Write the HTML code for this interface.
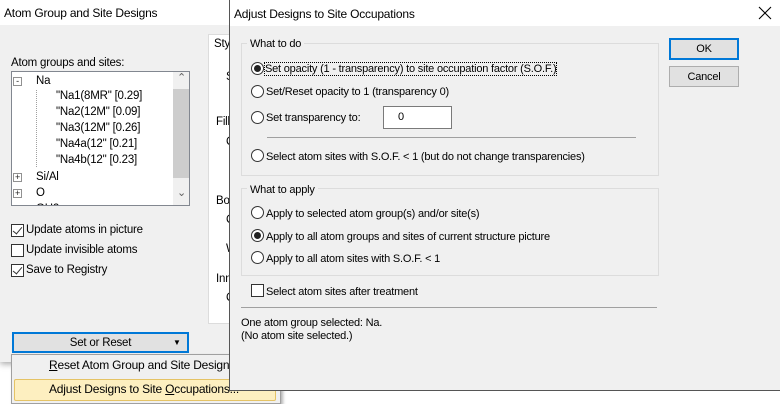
<!DOCTYPE html>
<html><head><style>
*{margin:0;padding:0;box-sizing:border-box}
body{width:780px;height:404px;overflow:hidden;background:#fff;font-family:"Liberation Sans",sans-serif;font-size:11.5px;letter-spacing:-0.2px;color:#000;position:relative}
.a{position:absolute;white-space:nowrap}
.t{margin-top:2px}
.rad{position:absolute;width:13px;height:13px;border:1px solid #333;border-radius:50%;background:#fff}
.rad.on::after{content:"";position:absolute;left:2px;top:2px;width:7px;height:7px;border-radius:50%;background:#222}
.chk{position:absolute;width:13px;height:13px;border:1px solid #333;background:#fff}
.chk.on::after{content:"";position:absolute;left:3px;top:0px;width:4px;height:8px;border:solid #333;border-width:0 1.5px 1.5px 0;transform:rotate(40deg)}
.grp{position:absolute;border:1px solid #dcdcdc}
.btn{position:absolute;background:#e1e1e1;border:1px solid #adadad;text-align:center}
.d{font-size:11px}
</style></head><body>
<!-- left window -->
<div class="a" style="left:0;top:0;width:282px;height:362px;background:#f0f0f0;box-shadow:0 2px 6px rgba(0,0,0,.35)"></div>
<div class="a" style="left:0;top:0;width:282px;height:25px;background:#fff"></div>
<div class="a" style="left:4px;top:6px;font-size:12px">Atom Group and Site Designs</div>
<div class="a" style="left:11px;top:57px">Atom groups and sites:</div>
<div class="a" style="left:11px;top:71px;width:179px;height:135px;background:#fff;border:1px solid #828790;overflow:hidden">
 <div class="a" style="left:161px;top:0;width:17px;height:133px;background:#f0f0f0"></div>
 <div class="a" style="left:161px;top:17px;width:17px;height:89px;background:#cdcdcd"></div>
 <div class="a" style="left:165px;top:-1px;color:#606060;font-size:11px">&#8963;</div>
 <div class="a" style="left:165px;top:114px;color:#606060;font-size:11px">&#8964;</div>
 <div class="a" style="left:1px;top:5px;width:9px;height:9px;border:1px solid #919191;font-size:9px;line-height:7px;text-align:center;color:#222">-</div>
 <div class="a" style="left:24px;top:3px">Na</div>
 <div class="a" style="left:24px;top:18px;width:1px;height:77px;border-left:1px dotted #a0a0a0"></div>
 <div class="a" style="left:44px;top:18px">"Na1(8MR" [0.29]</div>
 <div class="a" style="left:44px;top:34px">"Na2(12M" [0.09]</div>
 <div class="a" style="left:44px;top:50px">"Na3(12M" [0.26]</div>
 <div class="a" style="left:44px;top:66px">"Na4a(12" [0.21]</div>
 <div class="a" style="left:44px;top:82px">"Na4b(12" [0.23]</div>
 <div class="a" style="left:1px;top:101px;width:9px;height:9px;border:1px solid #919191;font-size:9px;line-height:7px;text-align:center;color:#222">+</div>
 <div class="a" style="left:24px;top:99px">Si/Al</div>
 <div class="a" style="left:1px;top:117px;width:9px;height:9px;border:1px solid #919191;font-size:9px;line-height:7px;text-align:center;color:#222">+</div>
 <div class="a" style="left:24px;top:115px">O</div>
 <div class="a" style="left:24px;top:131px">OH2</div>
</div>
<div class="chk on" style="left:11px;top:224px"></div><div class="a" style="left:26px;top:224px">Update atoms in picture</div>
<div class="chk" style="left:11px;top:244px"></div><div class="a" style="left:26px;top:244px">Update invisible atoms</div>
<div class="chk on" style="left:11px;top:264px"></div><div class="a" style="left:26px;top:264px">Save to Registry</div>
<div class="a" style="left:208px;top:34px;width:30px;height:290px;background:#fff;border:1px solid #dcdcdc"></div>
<div class="a" style="left:214px;top:38px">Sty</div>
<div class="a" style="left:226px;top:71px">S</div>
<div class="a" style="left:216px;top:116px">Fill</div>
<div class="a" style="left:226px;top:136px">C</div>
<div class="a" style="left:216px;top:195px">Bor</div>
<div class="a" style="left:226px;top:214px">C</div>
<div class="a" style="left:226px;top:243px">W</div>
<div class="a" style="left:216px;top:273px">Inn</div>
<div class="a" style="left:226px;top:292px">C</div>
<div class="a" style="left:12px;top:332px;width:177px;height:21px;background:#e1e1e1;border:2px solid #0078d7;text-align:center;line-height:18px">Set or Reset</div>
<div class="a" style="left:173px;top:338px;font-size:8px">&#9660;</div>
<!-- menu -->
<div class="a" style="left:11px;top:354px;width:270px;height:50px;background:#f0f0f0;border:1px solid #a0a0a0;box-shadow:2px 2px 3px rgba(0,0,0,.3)"></div>
<div class="a" style="left:14px;top:379px;width:262px;height:22px;background:#fdefc0;border:1px solid #e5c365;border-radius:2px"></div>
<div class="a" style="left:49px;top:358px;font-size:12px"><u>R</u>eset Atom Group and Site Designs</div>
<div class="a" style="left:49px;top:382px;font-size:12px">Adjust Designs to Site <u>O</u>ccupations...</div>
<!-- dialog -->
<div class="a" style="left:229px;top:0;width:551px;height:391px;background:#f0f0f0;border:1px solid #555;border-top:none;border-right:none"></div>
<div class="a" style="left:230px;top:0;width:550px;height:26px;background:#fff"></div>
<div class="a" style="left:234px;top:7px;font-size:12px">Adjust Designs to Site Occupations</div>
<svg class="a" style="left:758px;top:6px" width="14" height="14"><path d="M1 1L13 13M13 1L1 13" stroke="#000" stroke-width="1.1"/></svg>
<div class="d">
<div class="grp" style="left:241px;top:43px;width:418px;height:133px"></div>
<div class="a t" style="left:247px;top:36px;background:#f0f0f0;padding:0 3px">What to do</div>
<div class="rad on" style="left:251px;top:62px"></div>
<div class="a t" style="left:265px;top:61px;outline:1px dotted #000">Set opacity (1 - transparency) to site occupation factor (S.O.F.)</div>
<div class="rad" style="left:251px;top:85px"></div><div class="a t" style="left:266px;top:84px">Set/Reset opacity to 1 (transparency 0)</div>
<div class="rad" style="left:251px;top:111px"></div><div class="a t" style="left:266px;top:110px">Set transparency to:</div>
<div class="a" style="left:383px;top:106px;width:69px;height:23px;background:#fff;border:1px solid #7a7a7a;padding:4px 0 0 14px">0</div>
<div class="a" style="left:267px;top:137px;width:369px;height:1px;background:#a0a0a0"></div>
<div class="rad" style="left:251px;top:149px"></div><div class="a t" style="left:266px;top:149px">Select atom sites with S.O.F. &lt; 1 (but do not change transparencies)</div>
<div class="grp" style="left:241px;top:188px;width:418px;height:88px"></div>
<div class="a t" style="left:247px;top:182px;background:#f0f0f0;padding:0 3px">What to apply</div>
<div class="rad" style="left:251px;top:206px"></div><div class="a t" style="left:266px;top:206px">Apply to selected atom group(s) and/or site(s)</div>
<div class="rad on" style="left:251px;top:229px"></div><div class="a t" style="left:266px;top:229px">Apply to all atom groups and sites of current structure picture</div>
<div class="rad" style="left:251px;top:251px"></div><div class="a t" style="left:266px;top:251px">Apply to all atom sites with S.O.F. &lt; 1</div>
<div class="chk" style="left:251px;top:284px"></div><div class="a t" style="left:266px;top:284px">Select atom sites after treatment</div>
<div class="a" style="left:241px;top:307px;width:416px;height:1px;background:#a0a0a0"></div>
<div class="a t" style="left:241px;top:315px">One atom group selected: Na.</div>
<div class="a t" style="left:241px;top:328px">(No atom site selected.)</div>
<div class="btn" style="left:669px;top:38px;width:70px;height:22px;border:2px solid #0078d7;line-height:19px">OK</div>
<div class="btn" style="left:669px;top:66px;width:70px;height:21px;line-height:20px">Cancel</div>
</div>
</body></html>
